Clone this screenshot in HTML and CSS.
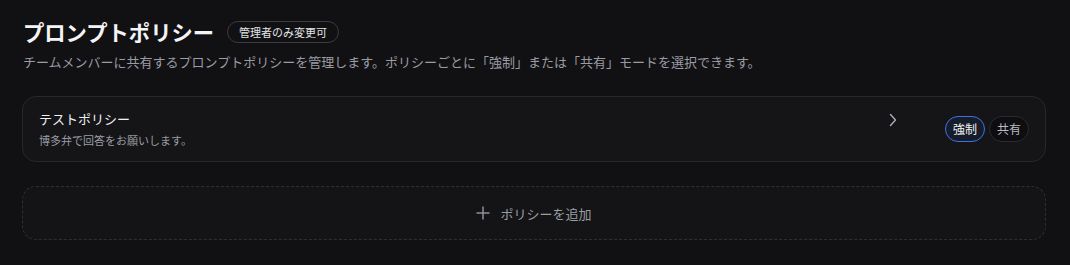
FILE: index.html
```html
<!DOCTYPE html>
<html lang="ja">
<head>
<meta charset="utf-8">
<link rel="stylesheet" href="styles.css">
</head>
<body>
<div class="page">
  <div class="header">
    <h1 class="title">プロンプトポリシー</h1>
    <span class="badge">管理者のみ変更可</span>
  </div>
  <p class="subtitle">チームメンバーに共有するプロンプトポリシーを管理します。ポリシーごとに「強制」または「共有」モードを選択できます。</p>
  <div class="card">
    <div class="card-text">
      <div class="card-title">テストポリシー</div>
      <div class="card-desc">博多弁で回答をお願いします。</div>
    </div>
    <svg class="chevron" width="8" height="14" viewBox="0 0 8 14"><path d="M1.5 1.5 L6.5 7 L1.5 12.5" fill="none" stroke="#a9acb5" stroke-width="1.4" stroke-linecap="round" stroke-linejoin="round"/></svg>
    <div class="modes">
      <button class="mode active">強制</button>
      <button class="mode">共有</button>
    </div>
  </div>
  <button class="add">
    <svg width="14" height="14" viewBox="0 0 14 14"><path d="M7 1 V13 M1 7 H13" stroke="#8c8f98" stroke-width="1.5" stroke-linecap="round"/></svg>
    <span>ポリシーを追加</span>
  </button>
</div>
</body>
</html>
```
FILE: styles.css
```css
* { box-sizing: border-box; }
html, body { margin: 0; padding: 0; background: #111113; }
body { font-family: "Noto Sans CJK JP", "Noto Sans", sans-serif; color: #ececef; }
.page { padding: 18px 24px 0 22px; }
.header { display: flex; align-items: center; gap: 13px; padding-left: 1px; }
.title { margin: 0; font-size: 21.3px; font-weight: 700; line-height: 28px; color: #f4f4f6; letter-spacing: 0; }
.badge { display: inline-flex; align-items: center; height: 22px; padding: 0 11px; border: 1px solid #3a3b40; border-radius: 11px; font-size: 11px; color: #e2e3e6; line-height: 1; }
.subtitle { margin: 7px 0 0 1px; font-size: 13px; line-height: 18px; color: #9a9ca4; }
.card { margin-top: 25px; height: 66px; border: 1px solid #27282c; border-radius: 14px; background: #151518; display: flex; align-items: center; padding: 0 16px 0 16px; }
.card-text { flex: 1; display: flex; flex-direction: column; gap: 4px; margin-top: -1px; }
.card-title { font-size: 13px; line-height: 18px; color: #f0f0f2; }
.card-desc { font-size: 11px; line-height: 16px; color: #9a9ca4; }
.chevron { margin-right: 48px; margin-top: -18px; }
.modes { display: flex; gap: 4px; }
.mode { font-family: inherit; height: 26px; width: 40px; padding: 0; border-radius: 13px; border: 1px solid #2a2b2f; background: #0e0e10; color: #b9bbc2; font-size: 12px; line-height: 1; }
.mode.active { border-color: #3d72e6; background: #171c2b; color: #f1f2f5; }
.add { margin-top: 24px; width: 100%; height: 54px; border: 1px dashed #2e2f34; border-radius: 14px; background: #141416; display: flex; align-items: center; justify-content: center; gap: 10px; font-family: inherit; font-size: 13px; color: #9a9ca4; }
```
